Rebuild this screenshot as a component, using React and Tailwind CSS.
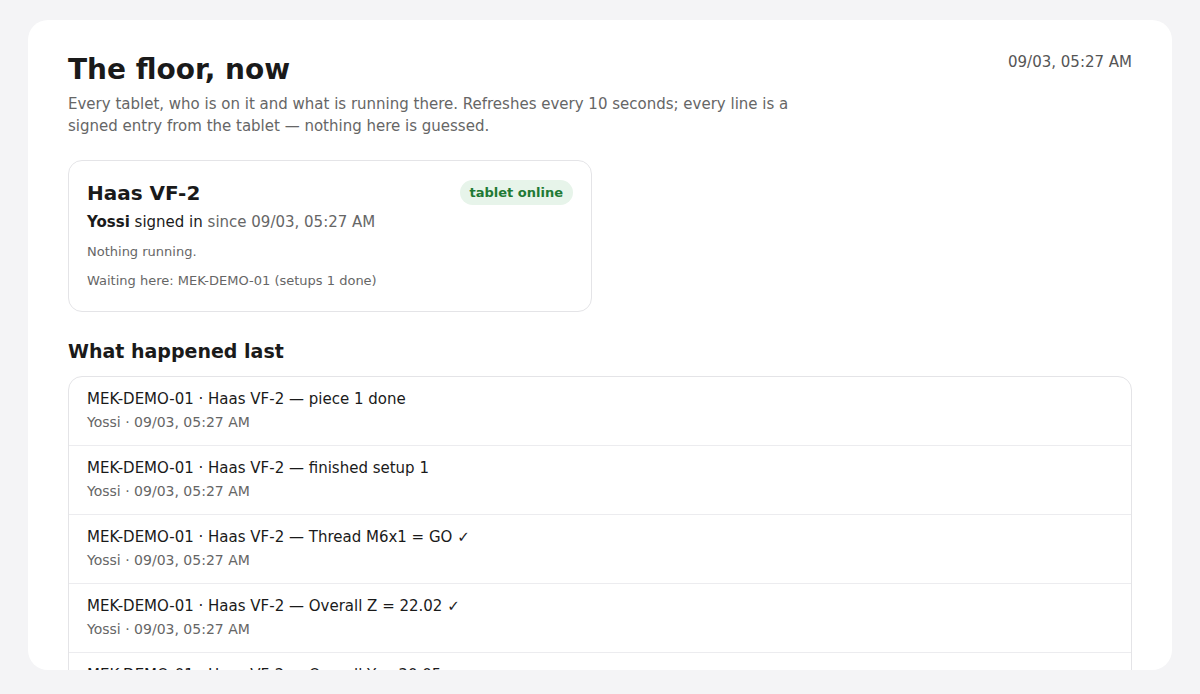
import React from "react";

const machine = {
  name: "Haas VF-2",
  operator: "Yossi",
  since: "09/03, 05:27 AM",
  running: null,
  waiting: "MEK-DEMO-01 (setups 1 done)",
};

const events = [
  { text: "MEK-DEMO-01 · Haas VF-2 — piece 1 done", who: "Yossi", at: "09/03, 05:27 AM" },
  { text: "MEK-DEMO-01 · Haas VF-2 — finished setup 1", who: "Yossi", at: "09/03, 05:27 AM" },
  { text: "MEK-DEMO-01 · Haas VF-2 — Thread M6x1 = GO ✓", who: "Yossi", at: "09/03, 05:27 AM" },
  { text: "MEK-DEMO-01 · Haas VF-2 — Overall Z = 22.02 ✓", who: "Yossi", at: "09/03, 05:27 AM" },
  { text: "MEK-DEMO-01 · Haas VF-2 — Overall Y = 30.05 ✓", who: "Yossi", at: "09/03, 05:27 AM" },
];

const MachineCard = ({ m }) => (
  <div className="w-[524px] rounded-[14px] border border-[#e4e4e7] bg-white px-[18px] pt-[18px] pb-[20px]">
    <div className="flex items-start justify-between">
      <div className="text-[20px] font-bold leading-[28px] text-[#1a1a1a]">{m.name}</div>
      <span className="mt-[1px] rounded-full bg-[#e7f4ea] px-[10px] py-[4px] text-[13px] font-bold leading-[17px] text-[#1f7a35]">
        tablet online
      </span>
    </div>
    <div className="mt-[4px] text-[15px] leading-[22px] text-[#1a1a1a]">
      <span className="font-bold">{m.operator}</span> signed in{" "}
      <span className="text-[#666]">since {m.since}</span>
    </div>
    <div className="mt-[9px] text-[13px] leading-[20px] text-[#666]">
      {m.running ? m.running : "Nothing running."}
    </div>
    <div className="mt-[9px] text-[13px] leading-[20px] text-[#666]">Waiting here: {m.waiting}</div>
  </div>
);

export default function App() {
  return (
    <div
      className="h-screen overflow-hidden bg-[#f4f4f6] px-[28px] pt-[20px]"
      style={{ fontFamily: '"DejaVu Sans", sans-serif' }}
    >
      <div className="h-[650px] overflow-hidden rounded-[20px] bg-white px-[40px] pt-[32px]">
        <div className="flex items-start justify-between">
          <div>
            <h1 className="text-[28px] font-bold leading-[36px] text-[#1a1a1a]">The floor, now</h1>
            <p className="mt-[5px] max-w-[740px] text-[15px] leading-[22px] text-[#666]">
              Every tablet, who is on it and what is running there. Refreshes every 10 seconds; every line is a
              signed entry from the tablet — nothing here is guessed.
            </p>
          </div>
          <div className="text-[15px] leading-[20px] text-[#555]">09/03, 05:27 AM</div>
        </div>

        <div className="mt-[23px]">
          <MachineCard m={machine} />
        </div>

        <h2 className="mt-[26px] text-[19px] font-bold leading-[26px] text-[#1a1a1a]">What happened last</h2>

        <div className="mt-[12px] rounded-[14px] border border-[#e4e4e7]">
          {events.map((e, i) => (
            <div
              key={i}
              className={`px-[18px] pt-[11px] pb-[13px] ${i > 0 ? "border-t border-[#ececef]" : ""}`}
            >
              <div className="text-[15px] leading-[22px] text-[#1a1a1a]">{e.text}</div>
              <div className="mt-[2px] text-[14px] leading-[20px] text-[#666]">
                {e.who} · {e.at}
              </div>
            </div>
          ))}
        </div>
      </div>
    </div>
  );
}
